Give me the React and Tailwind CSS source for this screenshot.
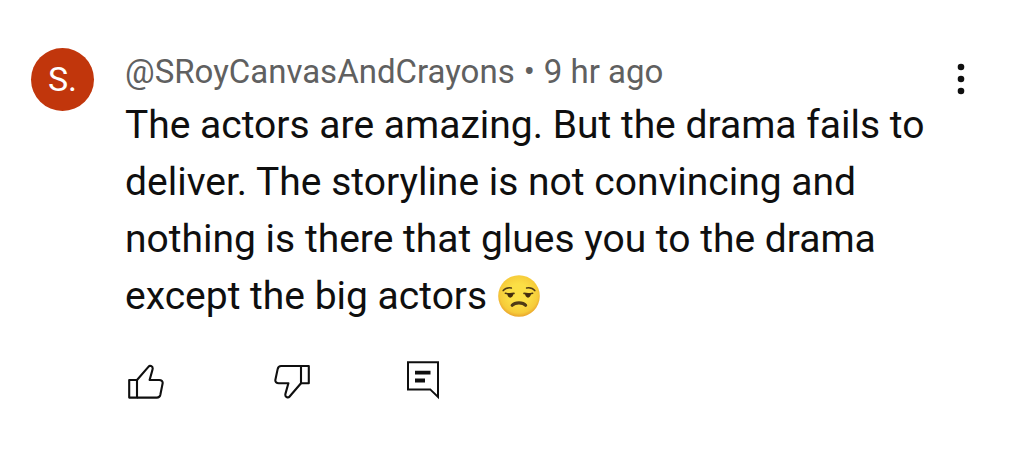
const COMMENT = {
  initial: "S.",
  author: "@SRoyCanvasAndCrayons",
  time: "9 hr ago",
  lines: [
    "The actors are amazing. But the drama fails to",
    "deliver. The storyline is not convincing and",
    "nothing is there that glues you to the drama",
    "except the big actors",
  ],
};

function ThumbUp() {
  return (
    <svg className="w-9 h-10" viewBox="8 6 36 40" fill="none" stroke="currentColor" strokeWidth="2.1" strokeLinejoin="round" aria-hidden="true">
      <path d="M9.2 25H17V42.6H9.2Z" />
      <path d="M17 25L28.6 11.6C29.8 10.2 32.7 11.1 32.7 13.3C32.7 14 32.5 14.7 32.3 15.4L29.6 25H39.2C41.6 25 43 26.5 42.6 28.5L40.3 40C39.9 41.7 38.7 42.6 36.9 42.6H17" />
    </svg>
  );
}

function ThumbDown() {
  return (
    <svg className="w-9 h-10" viewBox="6 6 36 40" fill="none" stroke="currentColor" strokeWidth="2.1" strokeLinejoin="round" aria-hidden="true">
      <path d="M33 11H40.8V28.3H33Z" />
      <path d="M33 28.3L21.4 41.7C20.2 43.1 17.3 42.2 17.3 40C17.3 39.3 17.5 38.6 17.7 37.9L20.4 28.3H10.8C8.4 28.3 7 26.8 7.4 24.8L9.7 13.9C10.1 12.2 11.3 11 13.1 11H33" />
    </svg>
  );
}

function ReplyIcon() {
  return (
    <svg className="w-9 h-10" viewBox="8 6 36 40" fill="none" stroke="currentColor" strokeWidth="2" aria-hidden="true">
      <path d="M10 7.3H40V42L32.2 34.4H10Z" />
      <path d="M17 17.7H32.5M17 25.5H27" strokeWidth="3.8" />
    </svg>
  );
}

function UnamusedFace() {
  return (
    <svg className="inline-block w-11 h-11 align-middle -mt-1.5" viewBox="0 0 44 44" role="img" aria-label="Unamused face">
      <defs>
        <radialGradient id="face" cx="50%" cy="45%" r="54%">
          <stop offset="0.45" stopColor="#fbdf45" />
          <stop offset="0.85" stopColor="#f6cb3a" />
          <stop offset="1" stopColor="#eba92e" />
        </radialGradient>
      </defs>
      <circle cx="22" cy="22" r="20.8" fill="url(#face)" />
      <g fill="none" stroke="#4f3a16" strokeLinecap="round">
        <path d="M6.2 16.6C8.2 14.2 11.2 13.4 14.4 14M29.6 14C32.8 13.4 35.8 14.2 37.8 16.6" strokeWidth="1.5" />
        <path d="M8.4 19.2C11 20 14 20 17 19.4M27 19.4C30 20 33 20 35.6 19.2" strokeWidth="1.6" />
        <path d="M15.2 31.2C18 28 26 28 28.6 31.2" strokeWidth="3.2" />
      </g>
      <g fill="#422b0d">
        <path d="M10.3 19.6C10.3 25 16.2 25 16.4 19.6Z" />
        <path d="M28 19.6C28.2 25 33.8 25 34 19.6Z" />
      </g>
    </svg>
  );
}

export default function App() {
  return (
    <main className="min-h-screen bg-white font-[Roboto,sans-serif] text-[#0f0f0f]">
      <article className="flex items-start pt-12 pl-[31px] pr-[43px]">
        <div className="size-[63px] shrink-0 rounded-full bg-[#c1360c] flex items-center justify-center text-[34px] text-white">
          {COMMENT.initial}
        </div>

        <div className="ml-[31px] min-w-0 flex-1">
          <header className="flex h-12 mb-px items-center gap-[9px] text-[33px] text-[#606060] whitespace-nowrap">
            <a href="#author">{COMMENT.author}</a>
            <span>•</span>
            <time>{COMMENT.time}</time>
          </header>

          <p className="text-[39px] leading-[57px] whitespace-nowrap">
            {COMMENT.lines.map((line, i) => (
              <span key={line} className="block">
                {line}
                {i === COMMENT.lines.length - 1 && <> <UnamusedFace /></>}
              </span>
            ))}
          </p>

          <div className="mt-9 ml-[3px] flex items-center">
            <button type="button" aria-label="Like"><ThumbUp /></button>
            <button type="button" aria-label="Dislike" className="ml-[110px]"><ThumbDown /></button>
            <button type="button" aria-label="Reply" className="ml-24"><ReplyIcon /></button>
          </div>
        </div>

        <button type="button" aria-label="More options" className="mt-[11px] shrink-0">
          <svg className="w-10 h-10" viewBox="0 0 40 40" fill="currentColor" aria-hidden="true">
            <circle cx="20" cy="8" r="3.3" />
            <circle cx="20" cy="20" r="3.3" />
            <circle cx="20" cy="32" r="3.3" />
          </svg>
        </button>
      </article>
    </main>
  );
}
